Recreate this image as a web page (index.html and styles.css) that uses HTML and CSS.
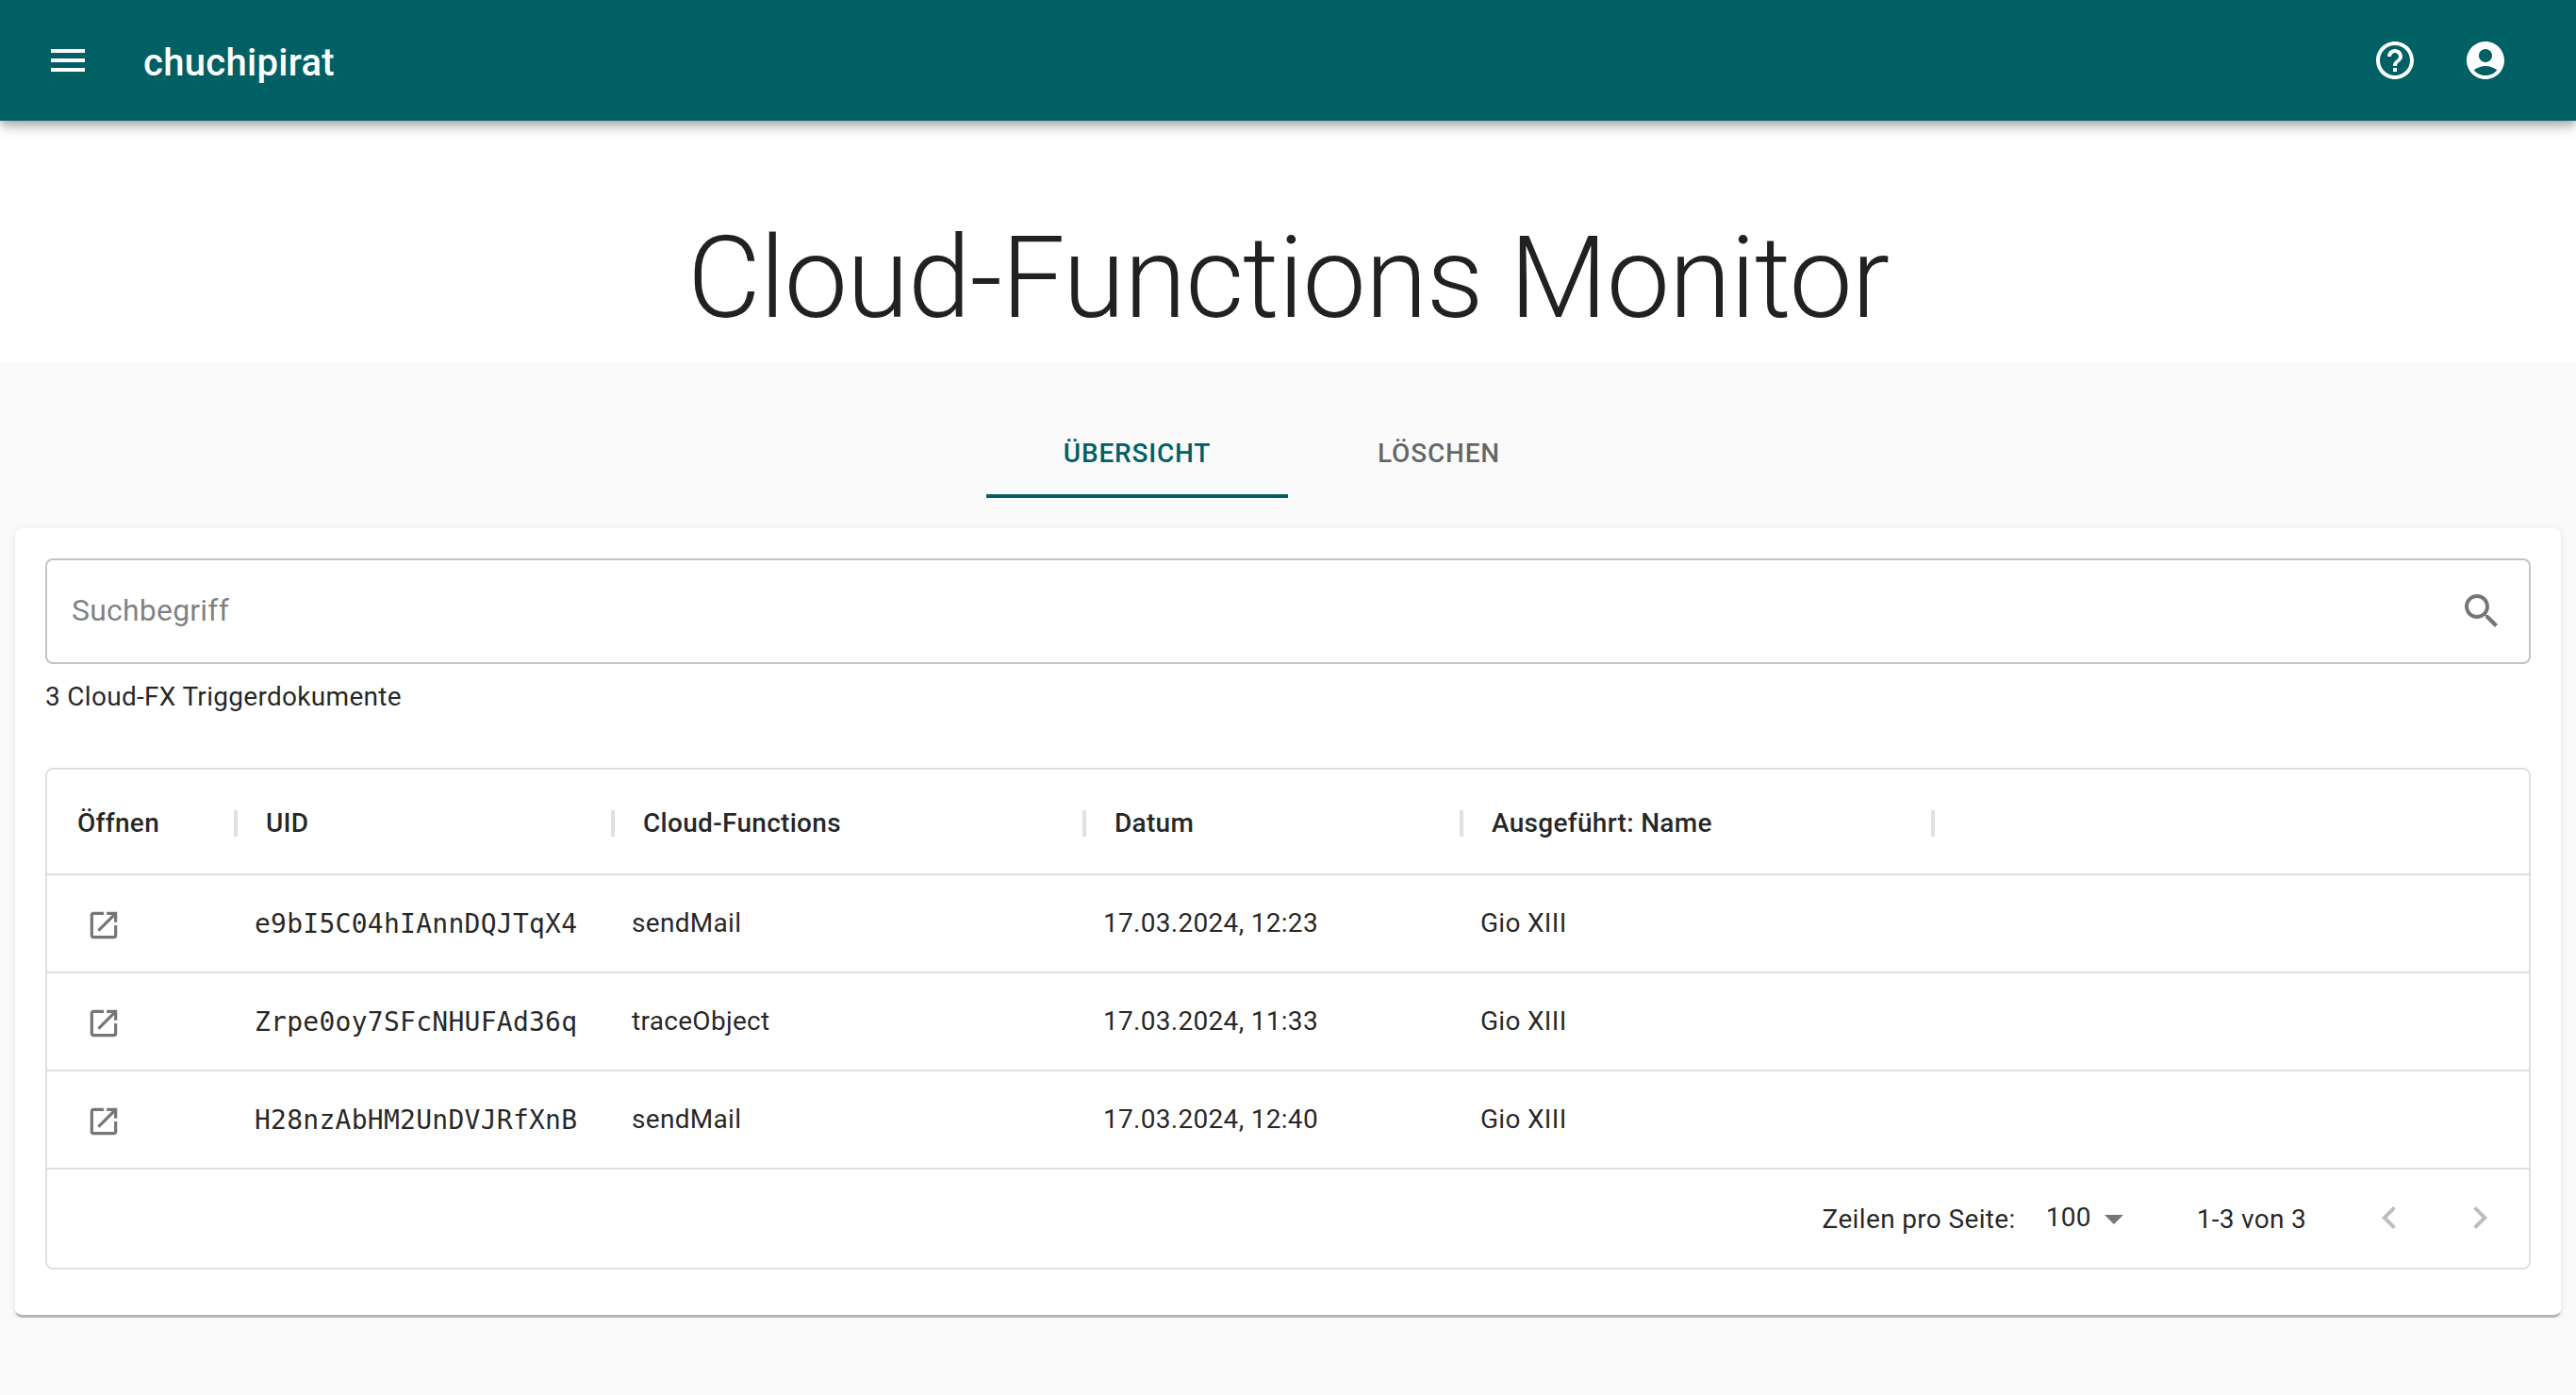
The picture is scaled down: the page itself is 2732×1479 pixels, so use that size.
FILE: index.html
```html
<!DOCTYPE html>
<html lang="de">
<head>
    <meta charset="UTF-8">
    <meta name="viewport" content="width=device-width, initial-scale=1.0">
    <title>Cloud-Functions Monitor</title>

    <link rel="stylesheet" href="styles.css">
</head>
<body>
    <header class="appbar">
        <button class="icon-btn menu-btn">
            <svg class="icon" viewBox="0 0 24 24"><path d="M3 18h18v-2H3v2zm0-5h18v-2H3v2zm0-7v2h18V6H3z"/></svg>
        </button>
        <div class="brand">chuchipirat</div>
        <div class="spacer"></div>
        <button class="icon-btn">
            <svg class="icon" viewBox="0 0 24 24"><path d="M11 18h2v-2h-2v2zm1-16C6.48 2 2 6.48 2 12s4.48 10 10 10 10-4.48 10-10S17.52 2 12 2zm0 18c-4.41 0-8-3.59-8-8s3.59-8 8-8 8 3.59 8 8-3.59 8-8 8zm0-14c-2.21 0-4 1.79-4 4h2c0-1.1.9-2 2-2s2 .9 2 2c0 2-3 1.75-3 5h2c0-2.25 3-2.5 3-5 0-2.21-1.79-4-4-4z"/></svg>
        </button>
        <button class="icon-btn">
            <svg class="icon" viewBox="0 0 24 24"><path d="M12 2C6.48 2 2 6.48 2 12s4.48 10 10 10 10-4.48 10-10S17.52 2 12 2zm0 4c1.93 0 3.5 1.57 3.5 3.5S13.93 13 12 13s-3.5-1.57-3.5-3.5S10.07 6 12 6zm0 14c-2.03 0-4.43-.82-6.14-2.88C7.55 15.8 9.68 15 12 15s4.45.8 6.14 2.12C16.43 19.18 14.03 20 12 20z"/></svg>
        </button>
    </header>

    <section class="hero">
        <h1>Cloud-Functions Monitor</h1>
    </section>

    <main class="content">
        <nav class="tabs">
            <div class="tab active">Übersicht</div>
            <div class="tab">Löschen</div>
        </nav>

        <div class="card">
            <div class="search">
                <span class="placeholder">Suchbegriff</span>
                <svg class="icon grey" viewBox="0 0 24 24"><path d="M15.5 14h-.79l-.28-.27C15.41 12.59 16 11.11 16 9.5 16 5.91 13.09 3 9.5 3S3 5.91 3 9.5 5.91 16 9.5 16c1.61 0 3.09-.59 4.23-1.57l.27.28v.79l5 4.99L20.49 19l-4.99-5zm-6 0C7.01 14 5 11.99 5 9.5S7.01 5 9.5 5 14 7.01 14 9.5 11.99 14 9.5 14z"/></svg>
            </div>
            <p class="count">3 Cloud-FX Triggerdokumente</p>

            <div class="grid">
                <div class="row head">
                    <div class="cell c-open">Öffnen</div>
                    <div class="cell c-uid">UID</div>
                    <div class="cell c-fn">Cloud-Functions</div>
                    <div class="cell c-date">Datum</div>
                    <div class="cell c-name">Ausgeführt: Name</div>
                </div>

                <div class="row">
                    <div class="cell c-open">
                        <button class="open-btn"><svg class="icon-small" viewBox="0 0 24 24"><path d="M19 19H5V5h7V3H5c-1.11 0-2 .9-2 2v14c0 1.1.89 2 2 2h14c1.1 0 2-.9 2-2v-7h-2v7zM14 3v2h3.59l-9.83 9.83 1.41 1.41L19 6.41V10h2V3h-7z"/></svg></button>
                    </div>
                    <div class="cell c-uid mono">e9bI5C04hIAnnDQJTqX4</div>
                    <div class="cell c-fn">sendMail</div>
                    <div class="cell c-date">17.03.2024, 12:23</div>
                    <div class="cell c-name">Gio XIII</div>
                </div>

                <div class="row">
                    <div class="cell c-open">
                        <button class="open-btn"><svg class="icon-small" viewBox="0 0 24 24"><path d="M19 19H5V5h7V3H5c-1.11 0-2 .9-2 2v14c0 1.1.89 2 2 2h14c1.1 0 2-.9 2-2v-7h-2v7zM14 3v2h3.59l-9.83 9.83 1.41 1.41L19 6.41V10h2V3h-7z"/></svg></button>
                    </div>
                    <div class="cell c-uid mono">Zrpe0oy7SFcNHUFAd36q</div>
                    <div class="cell c-fn">traceObject</div>
                    <div class="cell c-date">17.03.2024, 11:33</div>
                    <div class="cell c-name">Gio XIII</div>
                </div>

                <div class="row">
                    <div class="cell c-open">
                        <button class="open-btn"><svg class="icon-small" viewBox="0 0 24 24"><path d="M19 19H5V5h7V3H5c-1.11 0-2 .9-2 2v14c0 1.1.89 2 2 2h14c1.1 0 2-.9 2-2v-7h-2v7zM14 3v2h3.59l-9.83 9.83 1.41 1.41L19 6.41V10h2V3h-7z"/></svg></button>
                    </div>
                    <div class="cell c-uid mono">H28nzAbHM2UnDVJRfXnB</div>
                    <div class="cell c-fn">sendMail</div>
                    <div class="cell c-date">17.03.2024, 12:40</div>
                    <div class="cell c-name">Gio XIII</div>
                </div>

                <div class="pager">
                    <span class="pager-label">Zeilen pro Seite:</span>
                    <div class="pager-select">
                        <span>100</span>
                        <svg class="icon grey" viewBox="0 0 24 24"><path d="M7 10l5 5 5-5z"/></svg>
                    </div>
                    <span class="pager-rows">1-3 von 3</span>
                    <div class="pager-actions">
                        <button class="icon-btn disabled"><svg class="icon" viewBox="0 0 24 24"><path d="M15.41 7.41L14 6l-6 6 6 6 1.41-1.41L10.83 12z"/></svg></button>
                        <button class="icon-btn disabled"><svg class="icon" viewBox="0 0 24 24"><path d="M10 6L8.59 7.41 13.17 12l-4.58 4.59L10 18l6-6z"/></svg></button>
                    </div>
                </div>
            </div>
        </div>
    </main>
</body>
</html>
```

FILE: styles.css
```css
* {
    box-sizing: border-box;
}

body {
    margin: 0;
    font-family: Roboto, "Liberation Sans", sans-serif;
    font-size: 28px;
    color: rgba(0, 0, 0, 0.87);
    background-color: #fafafa;
}

.icon-btn,
.open-btn {
    display: flex;
    align-items: center;
    justify-content: center;
    padding: 0;
    border: none;
    background: none;
    color: inherit;
}

.icon-btn {
    width: 96px;
    height: 96px;
}

.icon {
    width: 48px;
    height: 48px;
    fill: currentColor;
}

.icon-small {
    width: 38px;
    height: 38px;
    fill: rgba(0, 0, 0, 0.54);
}

.grey {
    color: rgba(0, 0, 0, 0.54);
}

/* top bar */
.appbar {
    position: relative;
    display: flex;
    align-items: center;
    height: 128px;
    padding: 0 48px;
    color: white;
    background-color: #006064;
    box-shadow: 0 4px 8px -2px rgba(0, 0, 0, 0.2), 0 8px 10px 0 rgba(0, 0, 0, 0.14), 0 2px 20px 0 rgba(0, 0, 0, 0.12);
}

.menu-btn {
    margin-left: -24px;
    margin-right: 32px;
}

.brand {
    margin-top: 5px;
    font-size: 40px;
    font-weight: 500;
    letter-spacing: 0.3px;
}

.spacer {
    flex: 1;
}

/* title */
.hero {
    height: 256px;
    padding-top: 95px;
    background-color: white;
}

h1 {
    margin: 0;
    font-size: 120px;
    font-weight: 300;
    line-height: 1.2;
    letter-spacing: -1px;
    text-align: center;
}

/* tabs + card */
.content {
    padding: 48px 16px 0;
}

.tabs {
    display: flex;
    justify-content: center;
    margin-bottom: 32px;
}

.tab {
    width: 320px;
    height: 96px;
    line-height: 98px;
    font-weight: 500;
    letter-spacing: 0.8px;
    text-align: center;
    text-transform: uppercase;
    color: rgba(0, 0, 0, 0.6);
}

.tab.active {
    color: #006064;
    border-bottom: 4px solid #006064;
}

.card {
    height: 837px;
    padding: 32px;
    background-color: white;
    border-bottom: 3px solid #b4b4b4;
    border-radius: 8px;
    box-shadow: 0 1px 6px 0 rgba(0, 0, 0, 0.1);
}

.search {
    display: flex;
    align-items: center;
    justify-content: space-between;
    height: 112px;
    padding: 0 26px;
    border: 2px solid #c4c4c4;
    border-radius: 8px;
}

.placeholder {
    margin-top: -2px;
    font-size: 32px;
    letter-spacing: 0.2px;
    color: rgba(0, 0, 0, 0.5);
}

.count {
    margin: 15px 0 55px;
    line-height: 40px;
    letter-spacing: 0.3px;
}

/* table */
.grid {
    border: 2px solid #e0e0e0;
    border-radius: 8px;
}

.row {
    display: flex;
    align-items: center;
    height: 104px;
    border-bottom: 2px solid #e0e0e0;
}

.cell {
    padding: 0 20px 1px;
    letter-spacing: 0.3px;
}

.c-open { width: 200px; }
.c-uid { width: 400px; }
.c-fn { width: 500px; }
.c-date { width: 400px; }
.c-name { width: 500px; }

.mono {
    padding: 1px 20px 0;
    font-family: "DejaVu Sans Mono", "Liberation Mono", monospace;
    font-size: 28px;
    letter-spacing: 0.26px;
}

.head {
    height: 112px;
}

.head .cell {
    position: relative;
    padding: 3px 32px 0;
    font-weight: 500;
}

.head .cell::after {
    content: "";
    position: absolute;
    top: 6px;
    right: -2px;
    width: 4px;
    height: 28px;
    background-color: #e0e0e0;
}

.open-btn {
    width: 80px;
    height: 80px;
    padding-top: 4px;
}

/* pagination */
.pager {
    display: flex;
    align-items: center;
    justify-content: flex-end;
    height: 104px;
    padding-right: 4px;
    letter-spacing: 0.3px;
}

.pager-label {
    letter-spacing: 0.35px;
}

.pager-select {
    display: flex;
    align-items: center;
    width: 112px;
    margin: 0 64px 0 16px;
    padding-left: 16px;
}

.pager-select span {
    margin-top: -3px;
}

.pager-select .icon {
    margin-left: auto;
}

.pager-actions {
    display: flex;
    margin-top: -2px;
    margin-left: 40px;
}

.disabled {
    color: rgba(0, 0, 0, 0.26);
}
```
